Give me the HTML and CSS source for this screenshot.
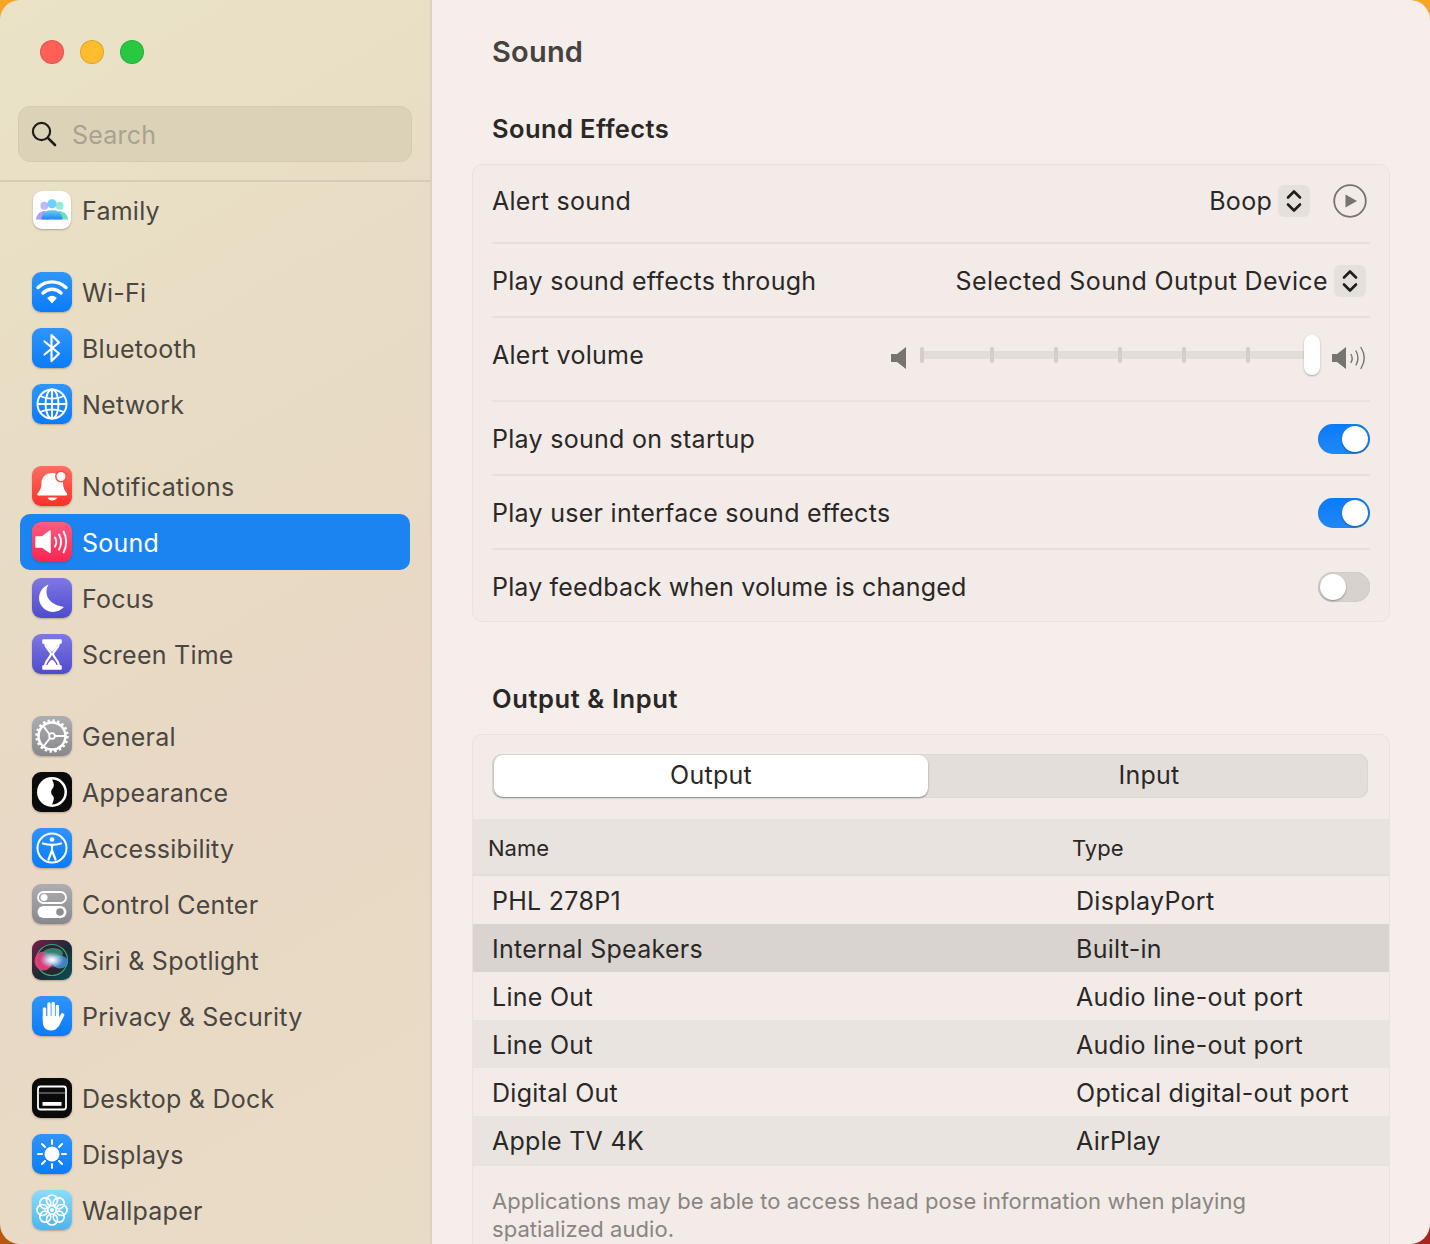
FILE: index.html
```html
<!DOCTYPE html>
<html lang="en">
  <head>
    <meta charset="UTF-8" />
    <title>Sound</title>
    <link rel="stylesheet" href="styles.css">
  </head>
  <body>
    <div class="window">
      <!-- Sidebar -->
      <aside class="sidebar">
        <div class="traffic">
          <span class="light red"></span>
          <span class="light yellow"></span>
          <span class="light green"></span>
        </div>
        <div class="search">
          <svg class="search-icon" viewBox="0 0 26 26" width="26" height="26">
            <circle cx="10.5" cy="10.5" r="8.6" fill="none" stroke="#1f1d1a" stroke-width="2.2" />
            <path d="M16.8 16.8 L24 24" stroke="#1f1d1a" stroke-width="2.6" stroke-linecap="round" />
          </svg>
          <span class="search-text">Search</span>
        </div>
        <nav class="nav">
          <div class="nav-group">
            <a class="nav-item">
              <span class="icon icon-white">
                <svg viewBox="0 0 40 40">
                  <defs>
                    <linearGradient id="famMid" x1="0" y1="0" x2="0" y2="1"><stop offset="0" stop-color="#6fd0fb" /><stop offset="1" stop-color="#1f86f2" /></linearGradient>
                  </defs>
                  <circle cx="12" cy="15.5" r="4.2" fill="#c3b5f7" />
                  <circle cx="28" cy="15.5" r="4.2" fill="#93ecd8" />
                  <path d="M3 30 C4 23 9 21 13 21 L18 30 Z" fill="#b09bf5" />
                  <path d="M37 30 C36 23 31 21 27 21 L22 30 Z" fill="#6fdcc0" />
                  <circle cx="20" cy="13.5" r="4.8" fill="#6fd0fb" />
                  <path d="M9 30 C9 23 14 20 20 20 C26 20 31 23 31 30 Z" fill="url(#famMid)" />
                </svg>
              </span>
              Family
            </a>
          </div>
          <div class="nav-group">
            <a class="nav-item">
              <span class="icon icon-blue">
                <svg viewBox="0 0 40 40" fill="none" stroke="#fff" stroke-linecap="round">
                  <path d="M6 15.5 C14 8 26 8 34 15.5" stroke-width="3.4" />
                  <path d="M11 21 C16.5 16 23.5 16 29 21" stroke-width="3.4" />
                  <path d="M16 26 L20 30.5 L24 26 C21.500 24 18.500 24 16 26 Z" fill="#fff" stroke-width="1.2" stroke-linejoin="round" />
                </svg>
              </span>
              Wi-Fi
            </a>
            <a class="nav-item">
              <span class="icon icon-blue">
                <svg viewBox="0 0 40 40" fill="none" stroke="#fff" stroke-width="2.2" stroke-linecap="round" stroke-linejoin="round">
                  <path d="M12.500 13.500 L27 25.500 L19.500 33 V7 L27 14.500 L12.500 26.500" />
                </svg>
              </span>
              Bluetooth
            </a>
            <a class="nav-item">
              <span class="icon icon-blue">
                <svg viewBox="0 0 40 40" fill="none" stroke="#fff" stroke-width="1.9">
                  <circle cx="20" cy="20" r="14.500" />
                  <ellipse cx="20" cy="20" rx="6.500" ry="14.500" />
                  <path d="M20 5.500 V34.500 M5.500 20 H34.500 M8 12 C15 15.500 25 15.500 32 12 M8 28 C15 24.500 25 24.500 32 28" />
                </svg>
              </span>
              Network
            </a>
          </div>
          <div class="nav-group">
            <a class="nav-item">
              <span class="icon icon-red">
                <svg viewBox="0 0 40 40" fill="#fff">
                  <path d="M20 7 C24 7 26 9 27 11 C27.500 14 29.500 15.500 31 15.600 C31 21 32 24 35 27.500 C35.500 28.500 35 29.500 34 29.500 H6.500 C5.200 29.500 4.800 28.500 5.500 27.500 C8.500 24 9.500 21 9.500 17 C9.500 11 14 7 20 7 Z" />
                  <path d="M15.500 31.500 H25 C24.500 33.500 22.500 34.500 20.300 34.500 C18 34.500 16 33.500 15.500 31.500 Z" />
                  <circle cx="29" cy="10.500" r="5.200" stroke="#fb4a40" stroke-width="1.400" />
                </svg>
              </span>
              Notifications
            </a>
            <a class="nav-item active">
              <span class="icon icon-pink">
                <svg viewBox="0 0 40 40">
                  <path d="M4 15 H10 L18 9 V30.500 L10 25 H4 Z" fill="#fff" stroke="#fff" stroke-width="1.500" stroke-linejoin="round" />
                  <g fill="none" stroke="#fff" stroke-width="1.900" stroke-linecap="round">
                    <path d="M23 15.500 C24.500 18 24.500 22 23 24.500" />
                    <path d="M27 12.500 C29.500 17 29.500 23 27 27.500" />
                    <path d="M31.500 9.500 C35 15.500 35 24.500 31.500 30.500" />
                  </g>
                </svg>
              </span>
              Sound
            </a>
            <a class="nav-item">
              <span class="icon icon-indigo">
                <svg viewBox="0 0 40 40">
                  <path d="M16.500 6.500 C12 14 14 26 32 29 C27 34 20 35.500 14 32 C4 26 5 11 16.500 6.500 Z" fill="#fff" />
                </svg>
              </span>
              Focus
            </a>
            <a class="nav-item">
              <span class="icon icon-indigo">
                <svg viewBox="0 0 40 40" fill="none" stroke="#fff" stroke-linejoin="round">
                  <path d="M11 6 H29 V9 H11 Z" fill="#fff" stroke-width="1.500" />
                  <path d="M11 32 H29 V35 H11 Z" fill="#fff" stroke-width="1.500" />
                  <path d="M13 9.500 C13.500 15 19 17 19 20 C19 23 13.500 26 13 32 H27 C26.500 26 21 23 21 20 C21 17 26.500 15 27 9.500 Z" stroke-width="2.200" />
                  <path d="M14.500 10 H25.500 C25 14 21.500 16 20 18 C18.500 16 15 14 14.500 10 Z" fill="#fff" stroke="none" />
                  <path d="M15.500 31 C16.500 28 18.500 26.500 20 25.500 C21.500 26.500 23.500 28 24.500 31 Z" fill="#fff" stroke="none" />
                </svg>
              </span>
              Screen Time
            </a>
          </div>
          <div class="nav-group">
            <a class="nav-item">
              <span class="icon icon-gray">
                <svg viewBox="0 0 40 40" fill="none" stroke="#fff">
                  <circle cx="20" cy="20" r="13.500" stroke-width="2.500" />
                  <circle cx="20" cy="20" r="15.300" stroke-width="2.800" stroke-dasharray="2.400 2.400" />
                  <circle cx="20" cy="20" r="2.800" stroke-width="1.800" />
                  <path d="M17.500 18.500 L11 9.500 M23 20 H33 M18 22 L11 31" stroke-width="1.900" />
                </svg>
              </span>
              General
            </a>
            <a class="nav-item">
              <span class="icon icon-black">
                <svg viewBox="0 0 40 40">
                  <circle cx="20" cy="20" r="15" fill="#fff" />
                  <path d="M20 7.500 A12.500 12.500 0 0 1 20 32.500 C22 28 22.500 26 21 24 C18.500 21 18.500 19 21 16 C22.500 14 22 11 20 7.500 Z" fill="#0a0a0a" />
                </svg>
              </span>
              Appearance
            </a>
            <a class="nav-item">
              <span class="icon icon-blue">
                <svg viewBox="0 0 40 40" fill="none" stroke="#fff">
                  <circle cx="20" cy="20" r="14.500" stroke-width="2" />
                  <circle cx="20" cy="11.500" r="2.300" fill="#fff" stroke="none" />
                  <path d="M11 15.500 C16 17 24 17 29 15.500 M20 17 V23 M20 22.500 L16.500 31.500 M20 22.500 L23.500 31.500" stroke-width="2.200" stroke-linecap="round" />
                </svg>
              </span>
              Accessibility
            </a>
            <a class="nav-item">
              <span class="icon icon-gray">
                <svg viewBox="0 0 40 40">
                  <rect x="6" y="8" width="28" height="11" rx="5.500" fill="none" stroke="#fff" stroke-width="1.800" />
                  <circle cx="12" cy="13.500" r="3.500" fill="#fff" />
                  <rect x="5.500" y="22" width="29" height="12" rx="6" fill="#fff" />
                  <circle cx="28" cy="28" r="3.800" fill="#8d8d92" />
                </svg>
              </span>
              Control Center
            </a>
            <a class="nav-item">
              <span class="icon icon-siri">
                <svg viewBox="0 0 40 40">
                  <defs>
                    <radialGradient id="siriCore"><stop offset="0" stop-color="#fff" /><stop offset="0.3" stop-color="#d8e0f6" /><stop offset="1" stop-color="#c9d4f2" stop-opacity="0" /></radialGradient>
                  </defs>
                  <circle cx="20" cy="20" r="15.500" fill="#2b2530" stroke="#37a57c" stroke-width="1.200" />
                  <ellipse cx="11.500" cy="21" rx="9" ry="9.500" fill="#e0407f" opacity="0.95" />
                  <ellipse cx="28" cy="22" rx="8" ry="6.500" fill="#3d86c8" opacity="0.95" />
                  <ellipse cx="21" cy="13.500" rx="10" ry="5.500" fill="#38a58c" opacity="0.7" />
                  <ellipse cx="20" cy="20" rx="12" ry="8" fill="url(#siriCore)" />
                </svg>
              </span>
              Siri &amp; Spotlight
            </a>
            <a class="nav-item">
              <span class="icon icon-blue">
                <svg viewBox="0 0 40 40" fill="#fff">
                  <path d="M12.500 13 V24 M17 8 V22 M21.200 7.500 V22 M25.400 10.500 V25" stroke="#fff" stroke-width="3.400" stroke-linecap="round" />
                  <path d="M25.500 29 L30.500 19" stroke="#fff" stroke-width="3.600" stroke-linecap="round" />
                  <path d="M10.800 20 H27.200 V28 C26 32 23.500 34.500 19 34.500 C14 34.500 10.800 31 10.800 26 Z" />
                </svg>
              </span>
              Privacy &amp; Security
            </a>
          </div>
          <div class="nav-group">
            <a class="nav-item">
              <span class="icon icon-black">
                <svg viewBox="0 0 40 40">
                  <rect x="6" y="8.500" width="28" height="23" rx="2.500" fill="none" stroke="#fff" stroke-width="1.800" />
                  <path d="M6.500 15 H33.500" stroke="#9a9a9a" stroke-width="1.200" />
                  <rect x="10.500" y="24" width="19" height="3.800" fill="#fff" />
                </svg>
              </span>
              Desktop &amp; Dock
            </a>
            <a class="nav-item">
              <span class="icon icon-blue">
                <svg viewBox="0 0 40 40">
                  <circle cx="20" cy="20" r="7.500" fill="#fff" />
                  <path d="M20 6 V10 M20 30 V34 M6 20 H10 M30 20 H34 M10 10 L13 13 M30 10 L27 13 M10 30 L13 27 M30 30 L27 27" stroke="#fff" stroke-width="2" stroke-linecap="round" />
                </svg>
              </span>
              Displays
            </a>
            <a class="nav-item">
              <span class="icon icon-sky">
                <svg viewBox="0 0 40 40" fill="none" stroke="#fff" stroke-width="1.700">
                  <circle cx="20" cy="10.500" r="5.500" />
                  <circle cx="20" cy="29.500" r="5.500" />
                  <circle cx="10.500" cy="20" r="5.500" />
                  <circle cx="29.500" cy="20" r="5.500" />
                  <circle cx="13.300" cy="13.300" r="5.500" />
                  <circle cx="26.700" cy="13.300" r="5.500" />
                  <circle cx="13.300" cy="26.700" r="5.500" />
                  <circle cx="26.700" cy="26.700" r="5.500" />
                  <circle cx="20" cy="20" r="2" fill="#fff" stroke="none" />
                </svg>
              </span>
              Wallpaper
            </a>
          </div>
        </nav>
      </aside>

      <!-- Main content -->
      <main class="content">
        <h1 class="page-title">Sound</h1>

        <h2 class="section-title">Sound Effects</h2>
        <section class="card">
          <div class="row row-alert">
            <span>Alert sound</span>
            <div class="row-right">
              <span>Boop</span>
              <span class="stepper">
                <svg viewBox="0 0 32 32" width="32" height="32" fill="none" stroke="#1f1d1a" stroke-width="2.600" stroke-linecap="round" stroke-linejoin="round">
                  <path d="M10 12.500 L16 6.500 L22 12.500 M10 19.500 L16 25.500 L22 19.500" />
                </svg>
              </span>
              <svg class="play" viewBox="0 0 34 34" width="34" height="34">
                <circle cx="17" cy="17" r="15.800" fill="none" stroke="#77736f" stroke-width="1.800" />
                <path d="M12.500 10.500 L24 17 L12.500 23.500 Z" fill="#77736f" />
              </svg>
            </div>
          </div>
          <div class="row row-device">
            <span>Play sound effects through</span>
            <div class="row-right">
              <span class="device-name">Selected Sound Output Device</span>
              <span class="stepper">
                <svg viewBox="0 0 32 32" width="32" height="32" fill="none" stroke="#1f1d1a" stroke-width="2.600" stroke-linecap="round" stroke-linejoin="round">
                  <path d="M10 12.500 L16 6.500 L22 12.500 M10 19.500 L16 25.500 L22 19.500" />
                </svg>
              </span>
            </div>
          </div>
          <div class="row row-volume">
            <span>Alert volume</span>
            <div class="volume">
              <svg class="vol-low" viewBox="0 0 16 24" width="16" height="24">
                <path d="M0 8 H6 L15 1 V23 L6 16 H0 Z" fill="#77736f" />
              </svg>
              <div class="slider">
                <span class="tick"></span>
                <span class="tick"></span>
                <span class="tick"></span>
                <span class="tick"></span>
                <span class="tick"></span>
                <span class="tick"></span>
                <span class="thumb"></span>
              </div>
              <svg class="vol-high" viewBox="0 0 34 24" width="34" height="24">
                <path d="M0 8 H5 L14 1 V23 L5 16 H0 Z" fill="#77736f" />
                <g fill="none" stroke="#77736f" stroke-width="1.400" stroke-linecap="round">
                  <path d="M19 8.500 C20.500 11 20.500 14 19 16.500" />
                  <path d="M24 5 C26.500 9.500 26.500 14.500 24 19" />
                  <path d="M29 1.500 C33 8 33 16 29 22.500" />
                </g>
              </svg>
            </div>
          </div>
          <div class="row row-toggle">
            <span>Play sound on startup</span>
            <span class="toggle on"></span>
          </div>
          <div class="row row-toggle">
            <span>Play user interface sound effects</span>
            <span class="toggle on"></span>
          </div>
          <div class="row row-last">
            <span>Play feedback when volume is changed</span>
            <span class="toggle"></span>
          </div>
        </section>

        <h2 class="section-title second">Output &amp; Input</h2>
        <section class="card card-table">
          <div class="tabs-wrap">
            <div class="tabs">
              <span class="tab selected">Output</span>
              <span class="tab">Input</span>
            </div>
          </div>
          <div class="thead">
            <span class="col-name">Name</span>
            <span class="col-type">Type</span>
          </div>
          <div class="tr">
            <span class="col-name">PHL 278P1</span>
            <span class="col-type">DisplayPort</span>
          </div>
          <div class="tr picked">
            <span class="col-name">Internal Speakers</span>
            <span class="col-type">Built-in</span>
          </div>
          <div class="tr">
            <span class="col-name">Line Out</span>
            <span class="col-type">Audio line-out port</span>
          </div>
          <div class="tr alt">
            <span class="col-name">Line Out</span>
            <span class="col-type">Audio line-out port</span>
          </div>
          <div class="tr">
            <span class="col-name">Digital Out</span>
            <span class="col-type">Optical digital-out port</span>
          </div>
          <div class="tr alt end">
            <span class="col-name">Apple TV 4K</span>
            <span class="col-type">AirPlay</span>
          </div>
          <p class="note">Applications may be able to access head pose information when playing spatialized audio.</p>
        </section>
      </main>
    </div>
  </body>
</html>
```

FILE: styles.css
```css
/* Page & wallpaper corners */
html,
body {
  margin: 0;
  height: 1244px;
  overflow: hidden;
}
body {
  font-family: Inter, "Liberation Sans", sans-serif;
  background:
    linear-gradient(to right, rgba(168, 38, 26, 0) 50%, rgba(168, 38, 26, 1) 100%) bottom / 100% 50% no-repeat,
    linear-gradient(to bottom, #f5a623 0, #f5a623 50%, #b9560f 100%);
}
.window {
  display: flex;
  height: 1244px;
  border-radius: 20px;
  overflow: hidden;
  color: #2a2826;
}

/* Sidebar */
.sidebar {
  flex: 0 0 430px;
  height: 1244px;
  overflow: hidden;
  border-right: 2px solid #dcd2bf;
  background: linear-gradient(150deg, #eae3c7 0%, #e8dcc4 35%, #e8d8c5 60%, #e9dcc6 100%);
}
.traffic {
  display: flex;
  gap: 16px;
  padding: 40px 0 0 40px;
}
.light {
  width: 24px;
  height: 24px;
  box-sizing: border-box;
  border-radius: 50%;
  border: 1px solid rgba(0, 0, 0, 0.12);
}
.light.red {
  background-color: #fe5f57;
}
.light.yellow {
  background-color: #febc2e;
}
.light.green {
  background-color: #28c840;
}
.search {
  display: flex;
  align-items: center;
  box-sizing: border-box;
  height: 56px;
  margin: 42px 18px 18px 18px;
  padding-left: 12px;
  border: 1px solid #d4cbb4;
  border-radius: 12px;
  background-color: #dcd2b8;
  color: #a9a290;
  font-size: 25px;
  letter-spacing: 0.2px;
}
.search-icon {
  margin-right: 15px;
}
.search-text {
  padding-top: 2px;
}
.nav {
  border-top: 2px solid #d6ccb6;
}
.nav-group {
  margin-bottom: 26px;
}
.nav-item {
  display: flex;
  align-items: center;
  box-sizing: border-box;
  height: 56px;
  margin: 0 20px;
  padding: 2px 0 0 12px;
  border-radius: 10px;
  color: #4a4641;
  font-size: 25px;
  letter-spacing: 0.25px;
}
.nav-item.active {
  background-color: #1b84f0;
  color: #fff;
}
.icon {
  flex: none;
  width: 40px;
  height: 40px;
  margin: -2px 10px 0 0;
  border-radius: 9px;
  box-shadow: 0 1px 2px rgba(80, 60, 40, 0.35);
}
.icon svg {
  display: block;
  width: 100%;
  height: 100%;
}
.icon-white {
  width: 38px;
  height: 38px;
  margin: -2px 11px 0 1px;
  background-color: #fff;
}
.icon-blue {
  background: linear-gradient(#2f95fb, #0a7bfa);
}
.icon-red {
  background: linear-gradient(#fd6f63, #fb3028);
}
.icon-pink {
  background: linear-gradient(#fb5c80, #fc2452);
}
.icon-indigo {
  background: linear-gradient(#7e78e6, #4f4acb);
}
.icon-gray {
  background: linear-gradient(#adadb2, #87878c);
}
.icon-black {
  background-color: #0a0a0a;
}
.icon-siri {
  background: linear-gradient(135deg, #7a1c4a, #1a2b33 55%, #0f4f5a);
}
.icon-sky {
  background: linear-gradient(#8adcfb, #4cb4ee);
}

/* Main content */
.content {
  flex: 1;
  height: 1244px;
  overflow: hidden;
  box-sizing: border-box;
  padding: 0 40px;
  background-color: #f5eeeb;
}
.page-title {
  margin: 0;
  padding: 34px 0 0 20px;
  height: 36px;
  line-height: 36px;
  font-size: 29px;
  font-weight: 600;
  letter-spacing: 0.2px;
  color: #46433f;
}
.section-title {
  margin: 0;
  padding: 43px 0 19px 20px;
  height: 32px;
  line-height: 32px;
  font-size: 25.500px;
  font-weight: 600;
  letter-spacing: 0.4px;
  color: #2a2826;
}
.section-title.second {
  padding-top: 61px;
  letter-spacing: 0.6px;
}
.card {
  box-sizing: border-box;
  border: 1px solid #e9e2de;
  border-radius: 10px;
  background-color: #f2ebe8;
  padding: 0 19px;
  font-size: 25px;
  letter-spacing: 0.28px;
}

/* Settings rows */
.row {
  display: flex;
  align-items: center;
  justify-content: space-between;
  box-sizing: border-box;
  border-bottom: 2px solid #e8e1dd;
}
.row-alert {
  height: 79px;
  padding-bottom: 5px;
}
.row-alert .row-right {
  padding-right: 3px;
}
.row-device {
  height: 74px;
  padding-top: 2px;
}
.device-name {
  letter-spacing: 0.38px;
}
.row-volume {
  height: 84px;
  padding-bottom: 8px;
}
.row-toggle {
  height: 74px;
  padding-top: 2px;
}
.row-last {
  height: 71px;
  border-bottom: none;
  padding-top: 2px;
  letter-spacing: 0.17px;
}
.row-right {
  display: flex;
  align-items: center;
  padding-right: 4px;
}
.stepper {
  width: 32px;
  height: 32px;
  margin-left: 6px;
  border-radius: 6px;
  background-color: #e6e0dc;
}
.stepper svg {
  display: block;
}
.play {
  margin-left: 23px;
}

/* Volume slider */
.volume {
  display: flex;
  align-items: center;
  padding-right: 4px;
}
.vol-low {
  margin: 6px 13px 0 0;
}
.slider {
  position: relative;
  display: flex;
  gap: 60px;
  align-items: center;
  box-sizing: border-box;
  width: 400px;
  height: 8px;
  background-color: #e3ddd8;
  border-radius: 4px;
}
.tick {
  flex: none;
  width: 4px;
  height: 16px;
  border-radius: 2px;
  background-color: #d4cec9;
}
.tick:first-child {
  margin-right: 6px;
}
.thumb {
  position: absolute;
  right: 0;
  top: -16px;
  width: 16px;
  height: 40px;
  border-radius: 8px;
  background-color: #fff;
  box-shadow: 0 1px 2px rgba(0, 0, 0, 0.3);
}
.vol-high {
  margin: 6px 0 0 12px;
}

/* Toggles */
.toggle {
  position: relative;
  display: block;
  width: 52px;
  height: 30px;
  border-radius: 15px;
  background-color: #d7d2cd;
  box-shadow: inset 0 0 1px rgba(0, 0, 0, 0.25);
}
.toggle::after {
  content: "";
  position: absolute;
  top: 2px;
  left: 2px;
  width: 26px;
  height: 26px;
  border-radius: 50%;
  background-color: #fff;
  box-shadow: 0 1px 2px rgba(0, 0, 0, 0.35);
}
.toggle.on {
  background: linear-gradient(#0a7bfa, #2188f5);
}
.toggle.on::after {
  left: 24px;
}

/* Output & Input table */
.card-table {
  padding: 0 0 30px;
}
.tabs-wrap {
  padding: 19px 21px 21px 19px;
}
.tabs {
  display: flex;
  box-sizing: border-box;
  height: 44px;
  padding: 1px 2px;
  border-radius: 10px;
  background-color: #e4deda;
  box-shadow: inset 0 0 1px rgba(0, 0, 0, 0.25);
}
.tab {
  flex: 1;
  padding-left: 4px;
  text-align: center;
  line-height: 40px;
}
.tab.selected {
  flex: 0 0 434px;
  padding-left: 0;
  border-radius: 9px;
  background-color: #fff;
  box-shadow: 0 1px 2px rgba(0, 0, 0, 0.4);
}
.thead,
.tr {
  display: grid;
  grid-template-columns: 584px 1fr;
  align-items: center;
}
.thead {
  height: 53px;
  padding: 2px 0 0 15px;
  border-bottom: 2px solid #e3ddd9;
  background-color: #e8e3df;
  font-size: 22px;
  letter-spacing: 0;
}
.tr {
  box-sizing: border-box;
  height: 48px;
  padding: 2px 0 0 19px;
}
.tr.picked {
  background-color: #d9d4d0;
}
.tr.alt {
  background-color: #e9e4e0;
}
.tr.end {
  height: 50px;
  border-bottom: 2px solid #e8e1dd;
}
.note {
  margin: 0;
  padding: 21px 130px 0 19px;
  font-size: 22px;
  line-height: 28px;
  letter-spacing: 0.05px;
  color: #8a8581;
}
```
